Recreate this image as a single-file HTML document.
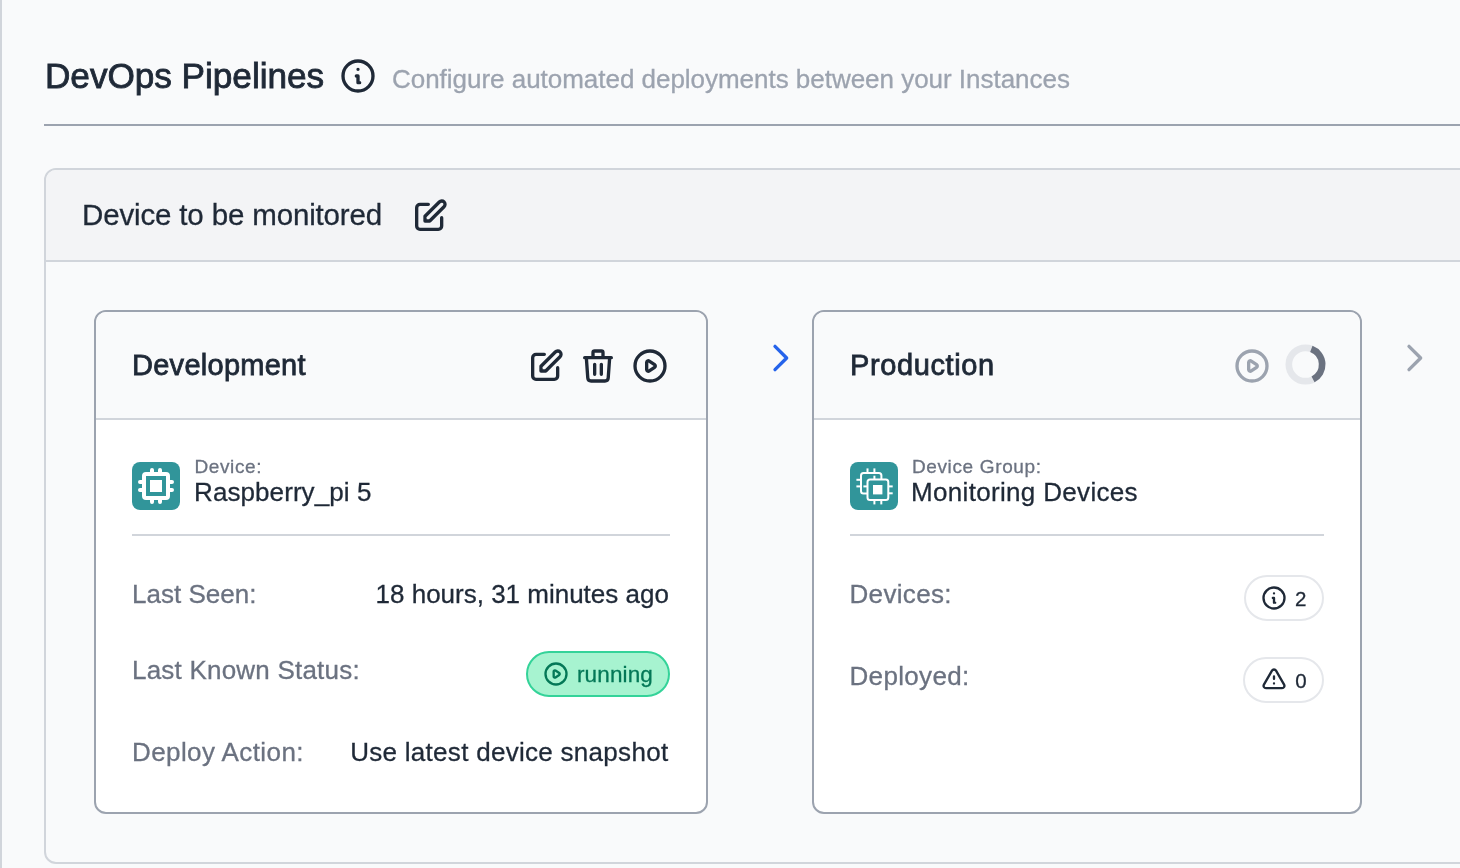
<!DOCTYPE html>
<html><head><meta charset="utf-8"><title>DevOps Pipelines</title>
<style>
html,body{margin:0;padding:0}
body{width:1460px;height:868px;overflow:hidden;position:relative;background:#f9fafb;font-family:"Liberation Sans",sans-serif}
.t{position:absolute;line-height:1;white-space:pre;font-family:"Liberation Sans",sans-serif}
</style></head><body>
<div style="position:absolute;left:0;top:0;width:2px;height:868px;background:#d1d5db"></div>
<div style="position:absolute;left:44px;top:124px;width:1500px;height:2px;background:#9ca3af"></div>
<div style="position:absolute;left:44px;top:168px;width:1500px;height:696px;box-sizing:border-box;border:2px solid #d1d5db;border-radius:12px;background:#f9fafb;overflow:hidden"><div style="height:90px;background:#f3f4f6;border-bottom:2px solid #d1d5db"></div></div>
<div style="position:absolute;left:94px;top:310px;width:614px;height:504px;box-sizing:border-box;border:2px solid #9ca3af;border-radius:12px;background:#fff;overflow:hidden"><div style="height:106px;background:#f9fafb;border-bottom:2px solid #d1d5db"></div></div>
<div style="position:absolute;left:812px;top:310px;width:550px;height:504px;box-sizing:border-box;border:2px solid #9ca3af;border-radius:12px;background:#fff;overflow:hidden"><div style="height:106px;background:#f9fafb;border-bottom:2px solid #d1d5db"></div></div>
<div style="position:absolute;left:132px;top:534px;width:538px;height:2px;background:#d1d5db"></div>
<div style="position:absolute;left:850px;top:534px;width:474px;height:2px;background:#d1d5db"></div>
<div style="position:absolute;left:132px;top:462px;width:48px;height:48px;border-radius:8px;background:#31959a"></div>
<svg style="position:absolute;left:136px;top:466px" width="40" height="40" viewBox="0 0 20 20" fill="#fff"><path d="M13 7H7v6h6V7z"/><path fill-rule="evenodd" clip-rule="evenodd" d="M7 2a1 1 0 012 0v1h2V2a1 1 0 112 0v1h2a2 2 0 012 2v2h1a1 1 0 110 2h-1v2h1a1 1 0 110 2h-1v2a2 2 0 01-2 2h-2v1a1 1 0 11-2 0v-1H9v1a1 1 0 11-2 0v-1H5a2 2 0 01-2-2v-2H2a1 1 0 110-2h1V9H2a1 1 0 010-2h1V5a2 2 0 012-2h2V2zM5 5h10v10H5V5z"/></svg>
<div style="position:absolute;left:850px;top:462px;width:48px;height:48px;border-radius:8px;background:#31959a"></div>
<svg style="position:absolute;left:850px;top:462px" width="48" height="48" viewBox="0 0 48 48" fill="none" stroke="#fff" stroke-width="2" stroke-linecap="butt"><path d="M17.5 6.4V11"/><path d="M24.4 6.4V11"/><path d="M6.4 17.8H11"/><path d="M6.4 24.4H11"/><rect x="11" y="11" width="20.4" height="20.4" rx="2.5" fill="#31959a"/><path d="M38.3 24.4H42.7"/><path d="M38.3 31.3H42.7"/><path d="M24.4 37.9V42.4"/><path d="M31.3 37.9V42.4"/><path d="M24.4 13.7V17.5"/><path d="M13.4 24.4H17.5"/><rect x="17.5" y="17.5" width="20.8" height="20.4" rx="2.5" fill="#31959a"/><rect x="23" y="23" width="9.4" height="9.4" fill="#fff" stroke="none"/></svg>
<div style="position:absolute;left:526px;top:651px;width:144px;height:46px;box-sizing:border-box;border:2px solid #34d399;border-radius:23px;background:#a7f3d0"></div>
<div style="position:absolute;left:1244px;top:575px;width:80px;height:46px;box-sizing:border-box;border:2px solid #e5e7eb;border-radius:23px;background:#fff"></div>
<div style="position:absolute;left:1243px;top:657px;width:81px;height:46px;box-sizing:border-box;border:2px solid #e5e7eb;border-radius:23px;background:#fff"></div>
<svg style="position:absolute;left:338px;top:56px" width="40" height="40" viewBox="0 0 24 24" fill="none" stroke="#1f2937" stroke-width="2" stroke-linecap="round" stroke-linejoin="round"><path d="M13 16h-1v-4h-1m1-4h.01M21 12a9 9 0 11-18 0 9 9 0 0118 0z"/></svg>
<svg style="position:absolute;left:410px;top:196px" width="40" height="40" viewBox="0 0 24 24" fill="none" stroke="#1f2937" stroke-width="2" stroke-linecap="round" stroke-linejoin="round"><path d="M11 5H6a2 2 0 00-2 2v11a2 2 0 002 2h11a2 2 0 002-2v-5m-1.414-9.414a2 2 0 112.828 2.828L11.828 15H9v-2.828l8.586-8.586z"/></svg>
<svg style="position:absolute;left:526px;top:346px" width="40" height="40" viewBox="0 0 24 24" fill="none" stroke="#1f2937" stroke-width="2" stroke-linecap="round" stroke-linejoin="round"><path d="M11 5H6a2 2 0 00-2 2v11a2 2 0 002 2h11a2 2 0 002-2v-5m-1.414-9.414a2 2 0 112.828 2.828L11.828 15H9v-2.828l8.586-8.586z"/></svg>
<svg style="position:absolute;left:578px;top:346px" width="40" height="40" viewBox="0 0 24 24" fill="none" stroke="#1f2937" stroke-width="2" stroke-linecap="round" stroke-linejoin="round"><path d="M19 7l-.867 12.142A2 2 0 0116.138 21H7.862a2 2 0 01-1.995-1.858L5 7m5 4v6m4-6v6m1-10V4a1 1 0 00-1-1h-4a1 1 0 00-1 1v3M4 7h16"/></svg>
<svg style="position:absolute;left:630px;top:346px" width="40" height="40" viewBox="0 0 24 24" fill="none" stroke="#1f2937" stroke-width="2" stroke-linecap="round" stroke-linejoin="round"><path d="M14.752 11.168l-3.197-2.132A1 1 0 0010 9.87v4.263a1 1 0 001.555.832l3.197-2.132a1 1 0 000-1.664z M21 12a9 9 0 11-18 0 9 9 0 0118 0z"/></svg>
<svg style="position:absolute;left:760px;top:338px" width="40" height="40" viewBox="0 0 24 24" fill="none" stroke="#2563eb" stroke-width="2" stroke-linecap="round" stroke-linejoin="round"><path d="M9 5l7 7-7 7"/></svg>
<svg style="position:absolute;left:1232px;top:346px" width="40" height="40" viewBox="0 0 24 24" fill="none" stroke="#9ca3af" stroke-width="2" stroke-linecap="round" stroke-linejoin="round"><path d="M14.752 11.168l-3.197-2.132A1 1 0 0010 9.87v4.263a1 1 0 001.555.832l3.197-2.132a1 1 0 000-1.664z M21 12a9 9 0 11-18 0 9 9 0 0118 0z"/></svg>
<svg style="position:absolute;left:0;top:0" width="1460" height="868" fill="none"><circle cx="1305.5" cy="364.5" r="16.67" stroke="#e5e7eb" stroke-width="6.67"/><path d="M1311.34 348.89A16.67 16.67 0 0 1 1313.07 379.35" stroke="#6b7280" stroke-width="6.67"/></svg>
<svg style="position:absolute;left:1394px;top:338px" width="40" height="40" viewBox="0 0 24 24" fill="none" stroke="#9ca3af" stroke-width="2" stroke-linecap="round" stroke-linejoin="round"><path d="M9 5l7 7-7 7"/></svg>
<svg style="position:absolute;left:542px;top:660px" width="28" height="28" viewBox="0 0 24 24" fill="none" stroke="#047857" stroke-width="2" stroke-linecap="round" stroke-linejoin="round"><path d="M14.752 11.168l-3.197-2.132A1 1 0 0010 9.87v4.263a1 1 0 001.555.832l3.197-2.132a1 1 0 000-1.664z M21 12a9 9 0 11-18 0 9 9 0 0118 0z"/></svg>
<svg style="position:absolute;left:1260px;top:584px" width="28" height="28" viewBox="0 0 24 24" fill="none" stroke="#1f2937" stroke-width="2" stroke-linecap="round" stroke-linejoin="round"><path d="M13 16h-1v-4h-1m1-4h.01M21 12a9 9 0 11-18 0 9 9 0 0118 0z"/></svg>
<svg style="position:absolute;left:1260px;top:666px" width="28" height="28" viewBox="0 0 24 24" fill="none" stroke="#1f2937" stroke-width="2" stroke-linecap="round" stroke-linejoin="round"><path d="M12 9v2m0 4h.01m-6.938 4h13.856c1.54 0 2.502-1.667 1.732-3L13.732 4c-.77-1.333-2.694-1.333-3.464 0L3.34 16c-.77 1.333.192 3 1.732 3z"/></svg>
<div style="position:absolute;left:0;top:0;width:1460px;height:868px;will-change:transform">
<div class="t" style="left:45.00px;top:58px;font-size:35.2px;color:#1f2937;letter-spacing:-0.039px;-webkit-text-stroke:0.85px #1f2937;">DevOps Pipelines</div>
<div class="t" style="left:392.00px;top:66px;font-size:26px;color:#9ca3af;letter-spacing:-0.026px;-webkit-text-stroke:0.3px #9ca3af;">Configure automated deployments between your Instances</div>
<div class="t" style="left:82.00px;top:200px;font-size:29.5px;color:#1f2937;letter-spacing:-0.150px;-webkit-text-stroke:0.3px #1f2937;">Device to be monitored</div>
<div class="t" style="left:132.00px;top:351px;font-size:29px;color:#1f2937;letter-spacing:0.269px;-webkit-text-stroke:0.8px #1f2937;">Development</div>
<div class="t" style="left:850.00px;top:351px;font-size:29px;color:#1f2937;letter-spacing:0.610px;-webkit-text-stroke:0.8px #1f2937;">Production</div>
<div class="t" style="left:194.40px;top:457px;font-size:19px;color:#6b7280;letter-spacing:0.621px;-webkit-text-stroke:0.3px #6b7280;">Device:</div>
<div class="t" style="left:194.10px;top:479px;font-size:26px;color:#1f2937;letter-spacing:0.073px;-webkit-text-stroke:0.3px #1f2937;">Raspberry_pi 5</div>
<div class="t" style="left:132.00px;top:581px;font-size:26px;color:#6b7280;letter-spacing:0.012px;-webkit-text-stroke:0.3px #6b7280;">Last Seen:</div>
<div class="t" style="left:375.60px;top:581px;font-size:26px;color:#1f2937;letter-spacing:-0.007px;-webkit-text-stroke:0.3px #1f2937;">18 hours, 31 minutes ago</div>
<div class="t" style="left:132.00px;top:657px;font-size:26px;color:#6b7280;letter-spacing:0.212px;-webkit-text-stroke:0.3px #6b7280;">Last Known Status:</div>
<div class="t" style="left:577.00px;top:664px;font-size:22.5px;color:#047857;letter-spacing:0.126px;-webkit-text-stroke:0.3px #047857;">running</div>
<div class="t" style="left:132.00px;top:739px;font-size:26px;color:#6b7280;letter-spacing:0.406px;-webkit-text-stroke:0.3px #6b7280;">Deploy Action:</div>
<div class="t" style="left:350.20px;top:739px;font-size:26px;color:#1f2937;letter-spacing:0.288px;-webkit-text-stroke:0.3px #1f2937;">Use latest device snapshot</div>
<div class="t" style="left:911.90px;top:457px;font-size:19px;color:#6b7280;letter-spacing:0.645px;-webkit-text-stroke:0.3px #6b7280;">Device Group:</div>
<div class="t" style="left:911.00px;top:479px;font-size:26px;color:#1f2937;letter-spacing:0.324px;-webkit-text-stroke:0.3px #1f2937;">Monitoring Devices</div>
<div class="t" style="left:849.50px;top:581px;font-size:26px;color:#6b7280;letter-spacing:0.332px;-webkit-text-stroke:0.3px #6b7280;">Devices:</div>
<div class="t" style="left:849.50px;top:663px;font-size:26px;color:#6b7280;letter-spacing:0.331px;-webkit-text-stroke:0.3px #6b7280;">Deployed:</div>
<div class="t" style="left:1295.05px;top:589px;font-size:20.5px;color:#1f2937;letter-spacing:0.000px;-webkit-text-stroke:0.3px #1f2937;">2</div>
<div class="t" style="left:1295.20px;top:671px;font-size:20.5px;color:#1f2937;letter-spacing:0.000px;-webkit-text-stroke:0.3px #1f2937;">0</div>
</div>
</body></html>
